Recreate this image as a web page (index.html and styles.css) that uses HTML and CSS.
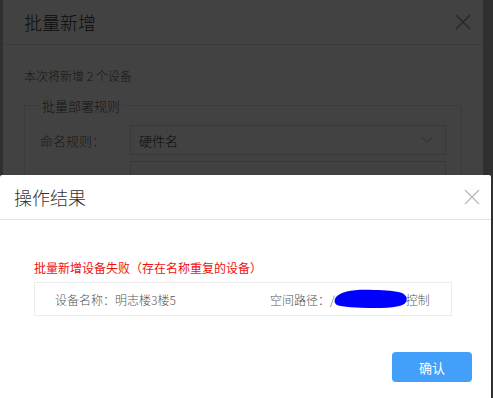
FILE: index.html
```html
<!DOCTYPE html>
<html lang="zh-CN">
<head>
    <meta charset="UTF-8">
    <meta name="viewport" content="width=device-width, initial-scale=1.0">
    <title>操作结果</title>
    <link rel="stylesheet" href="styles.css">
</head>

<body>
    <div class="page">
        <div class="dialog dialog-back">
            <div class="dialog-header">
                <span class="dialog-title">批量新增</span>
                <svg class="close-icon" width="16" height="16" viewBox="0 0 16 16"><path d="M1 1 L15 15 M15 1 L1 15" stroke="#999" stroke-width="1.5"/></svg>
            </div>
            <div class="dialog-body">
                <p class="summary">本次将新增 2 个设备</p>
                <fieldset class="rules">
                    <legend>批量部署规则</legend>
                    <div class="form-row">
                        <label>命名规则：</label>
                        <div class="fake-select">
                            <span>硬件名</span>
                            <svg width="12" height="8" viewBox="0 0 12 8"><path d="M1 1.5 L6 6 L11 1.5" fill="none" stroke="#c0c4cc" stroke-width="1.2"/></svg>
                        </div>
                    </div>
                    <div class="form-row">
                        <label></label>
                        <div class="fake-select"></div>
                    </div>
                </fieldset>
            </div>
        </div>
    </div>

    <div class="overlay"></div>

    <div class="dialog dialog-front">
        <div class="dialog-header">
            <span class="dialog-title">操作结果</span>
            <svg class="close-icon" width="16" height="16" viewBox="0 0 16 16"><path d="M1 1 L15 15 M15 1 L1 15" stroke="#b8b8b8" stroke-width="1.3"/></svg>
        </div>
        <div class="dialog-body">
            <p class="error">批量新增设备失败（存在名称重复的设备）</p>
            <div class="result-box">
                <span class="result-name">设备名称：明志楼3楼5</span>
                <span class="result-path">空间路径：/<svg class="blot" width="74" height="20" viewBox="0 0 74 20"><path d="M2 8 C8 2 20 0 40 1 C52 1 62 2 68 4 C72 6 74 9 72 13 C70 17 60 19 40 19 C22 19 8 18 3 16 C0 14 0 11 2 8 Z" fill="#0000ff"/></svg>控制</span>
            </div>
            <div class="dialog-footer">
                <button type="button">确认</button>
            </div>
        </div>
    </div>
</body>
</html>
```

FILE: styles.css
```css
html, body {
    margin: 0;
    padding: 0;
}

body {
    width: 493px;
    height: 398px;
    overflow: hidden;
    position: relative;
    background-color: #b8b8b8;
    font-family: "Noto Sans CJK SC", "Noto Sans", sans-serif;
    font-weight: 300;
    color: #333;
}

.page {
    padding-left: 3px;
}

.dialog {
    background-color: #ffffff;
}

.dialog-back {
    width: 480px;
    height: 400px;
}

.dialog-back .dialog-header {
    height: 45px;
    padding: 0 12px 0 21px;
    border-bottom: 1px solid #e5e5e5;
    display: flex;
    align-items: center;
    justify-content: space-between;
    box-sizing: border-box;
}

.dialog-title {
    font-size: 18px;
    color: #333;
}

.dialog-back .dialog-body {
    padding: 21px 21px 0 21px;
}

.summary {
    margin: 0;
    font-size: 12px;
    line-height: 20px;
    color: #555;
}

.rules {
    margin: 10px 0 0;
    padding: 4px 15px 0;
    border: 1px solid #e3e3e3;
}

.rules legend {
    padding: 0 2px;
    font-size: 13px;
    color: #555;
}

.form-row {
    display: flex;
    align-items: center;
    margin-top: 6px;
}

.form-row label {
    width: 90px;
    font-size: 13px;
    color: #666;
}

.fake-select {
    flex: 1;
    height: 30px;
    padding: 0 12px 0 8px;
    border: 1px solid #dcdcdc;
    display: flex;
    align-items: center;
    justify-content: space-between;
    font-size: 13px;
    color: #333;
    box-sizing: border-box;
}

.overlay {
    position: absolute;
    inset: 0;
    background-color: rgba(0, 0, 0, 0.74);
}

.dialog-front {
    position: absolute;
    left: 0;
    top: 175px;
    width: 491px;
    height: 240px;
    border-radius: 2px;
}

.dialog-front .dialog-header {
    height: 45px;
    padding: 0 11px 0 14px;
    border-bottom: 1px solid #e2e2e2;
    display: flex;
    align-items: center;
    justify-content: space-between;
    box-sizing: border-box;
}

.dialog-front .dialog-body {
    padding: 40px 19px 0 34px;
}

.error {
    margin: 0 0 6px;
    font-size: 12px;
    font-weight: 400;
    line-height: 16px;
    color: #f01010;
}

.result-box {
    width: 418px;
    height: 34px;
    border: 1px solid #ececec;
    box-sizing: border-box;
    display: flex;
    align-items: center;
    padding-left: 20px;
    font-size: 12px;
    color: #555;
}

.result-name {
    width: 215px;
}

.result-path {
    display: flex;
    align-items: center;
}

.blot {
    margin: 0 -2px 0 -1px;
}

.dialog-footer {
    display: flex;
    justify-content: flex-end;
    margin-top: 36px;
}

button {
    width: 80px;
    height: 30px;
    background-color: #429ffa;
    color: #ffffff;
    border: none;
    border-radius: 4px;
    font-size: 13px;
    font-family: "Noto Sans CJK SC", sans-serif;
    cursor: pointer;
}
```
